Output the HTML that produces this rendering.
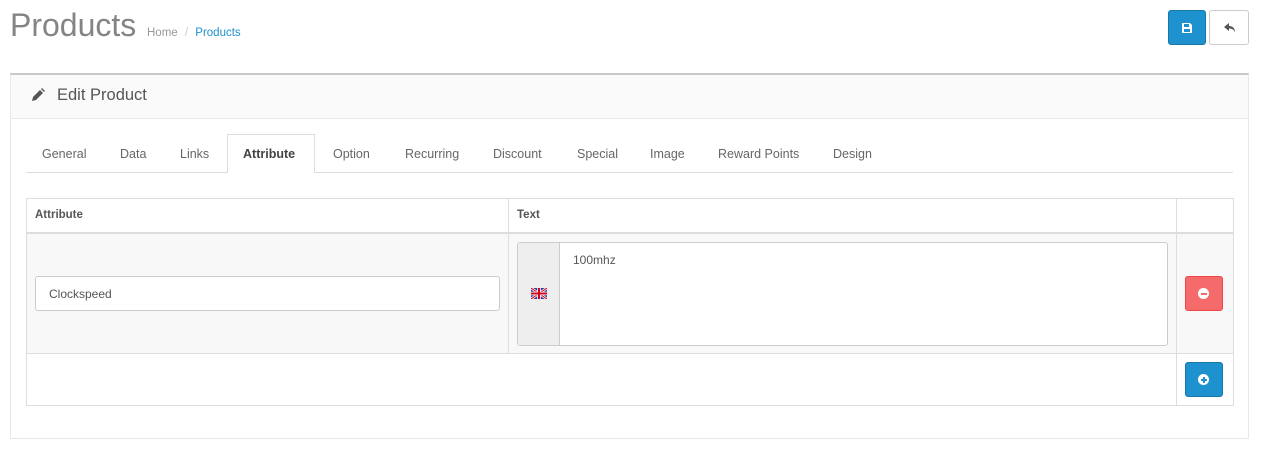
<!DOCTYPE html><html><head><style>
*{box-sizing:border-box;margin:0;padding:0}
body{width:1263px;height:455px;background:#fff;font-family:"Liberation Sans",sans-serif;position:relative;overflow:hidden;color:#666}
.a{position:absolute}
.tab{position:absolute;top:147px;font-size:12.5px;color:#666}
</style></head><body>
<div class="a" style="left:10px;top:7px;font-size:32px;color:#848484">Products</div>
<div class="a" style="left:147px;top:27px;font-size:11.5px;color:#999">Home <span style="color:#ccc;margin:0 4px">/</span> <span style="color:#1e91cf">Products</span></div>
<div class="a" style="left:1168px;top:10px;width:38px;height:35px;background:#1e91cf;border:1px solid #1978ab;border-radius:3px"><svg width="12" height="12" viewBox="0 0 12 12" style="position:absolute;left:12px;top:11px"><path d="M1 1h8l2 2v8H1z" fill="#fff"/><rect x="3" y="2" width="5" height="3" fill="#1e91cf"/><rect x="3" y="7" width="6" height="3" fill="#1e91cf"/></svg></div>
<div class="a" style="left:1209px;top:10px;width:40px;height:35px;background:#fff;border:1px solid #ccc;border-radius:3px"><svg width="14" height="12" viewBox="0 0 14 12" style="position:absolute;left:13px;top:11px"><path d="M6 1L1 5l5 4V6.5c3 0 5 1 6 4 0-4-2-6.5-6-6.5z" fill="#555"/></svg></div>
<div class="a" style="left:10px;top:73px;width:1239px;height:366px;border:1px solid #e8e8e8;border-top:2px solid #c8c8c8"></div>
<div class="a" style="left:11px;top:75px;width:1237px;height:44px;background:#fafafa;border-bottom:1px solid #e8e8e8"></div>
<svg class="a" style="left:31px;top:88px" width="14" height="14" viewBox="0 0 14 14"><path d="M1 13l1-4 7-7 3 3-7 7z" fill="#555"/><path d="M10 1l1-1 3 3-1 1z" fill="#555"/></svg>
<div class="a" style="left:57px;top:86px;font-size:16.5px;color:#555">Edit Product</div>
<div class="a" style="left:26px;top:172px;width:1207px;height:1px;background:#ddd"></div>
<div class="a" style="left:227px;top:134px;width:88px;height:39px;background:#fff;border:1px solid #ddd;border-bottom:none"></div>
<div class="tab" style="left:42px">General</div><div class="tab" style="left:120px">Data</div><div class="tab" style="left:180px">Links</div>
<div class="tab" style="left:243px;color:#444;font-weight:bold">Attribute</div><div class="tab" style="left:333px">Option</div>
<div class="tab" style="left:405px">Recurring</div><div class="tab" style="left:493px">Discount</div><div class="tab" style="left:577px">Special</div>
<div class="tab" style="left:650px">Image</div><div class="tab" style="left:718px">Reward Points</div><div class="tab" style="left:833px">Design</div>
<div class="a" style="left:26px;top:198px;width:1208px;height:208px;border:1px solid #ddd"></div>
<div class="a" style="left:27px;top:232px;width:1206px;height:2px;background:#ddd"></div>
<div class="a" style="left:27px;top:234px;width:1206px;height:119px;background:#f8f8f8"></div>
<div class="a" style="left:27px;top:353px;width:1206px;height:1px;background:#ddd"></div>
<div class="a" style="left:508px;top:199px;width:1px;height:154px;background:#ddd"></div>
<div class="a" style="left:1176px;top:199px;width:1px;height:206px;background:#ddd"></div>
<div class="a" style="left:35px;top:209px;font-size:11.5px;font-weight:bold;color:#555">Attribute</div>
<div class="a" style="left:517px;top:209px;font-size:11.5px;font-weight:bold;color:#555">Text</div>
<div class="a" style="left:35px;top:276px;width:465px;height:35px;background:#fff;border:1px solid #ccc;border-radius:3px;padding:10px 13px;font-size:12px;color:#555">Clockspeed</div>
<div class="a" style="left:517px;top:242px;width:651px;height:104px;background:#fff;border:1px solid #ccc;border-radius:3px"></div>
<div class="a" style="left:518px;top:243px;width:42px;height:102px;background:#eee;border-right:1px solid #ccc"></div>
<svg class="a" style="left:531px;top:288px" width="16" height="11" viewBox="0 0 16 11"><rect width="16" height="11" fill="#2a3f9a"/><path d="M0 0L16 11M16 0L0 11" stroke="#fff" stroke-width="2.5"/><path d="M0 0L16 11M16 0L0 11" stroke="#d0021b" stroke-width="1"/><path d="M8 0v11M0 5.5h16" stroke="#fff" stroke-width="3.5"/><path d="M8 0v11M0 5.5h16" stroke="#d0021b" stroke-width="2"/></svg>
<div class="a" style="left:573px;top:253px;font-size:12px;color:#555">100mhz</div>
<div class="a" style="left:1185px;top:276px;width:38px;height:35px;background:#f56b6b;border:1px solid #f24545;border-radius:3px"><div class="a" style="left:12px;top:11px;width:11px;height:11px;border-radius:50%;background:#fff"></div><div class="a" style="left:14.5px;top:15.5px;width:6px;height:2px;background:#f56b6b"></div></div>
<div class="a" style="left:1185px;top:362px;width:38px;height:35px;background:#1e91cf;border:1px solid #1978ab;border-radius:3px"><div class="a" style="left:12px;top:11px;width:11px;height:11px;border-radius:50%;background:#fff"></div><div class="a" style="left:14.5px;top:15.5px;width:6px;height:2px;background:#1e91cf"></div><div class="a" style="left:16.5px;top:13.5px;width:2px;height:6px;background:#1e91cf"></div></div>
</body></html>
